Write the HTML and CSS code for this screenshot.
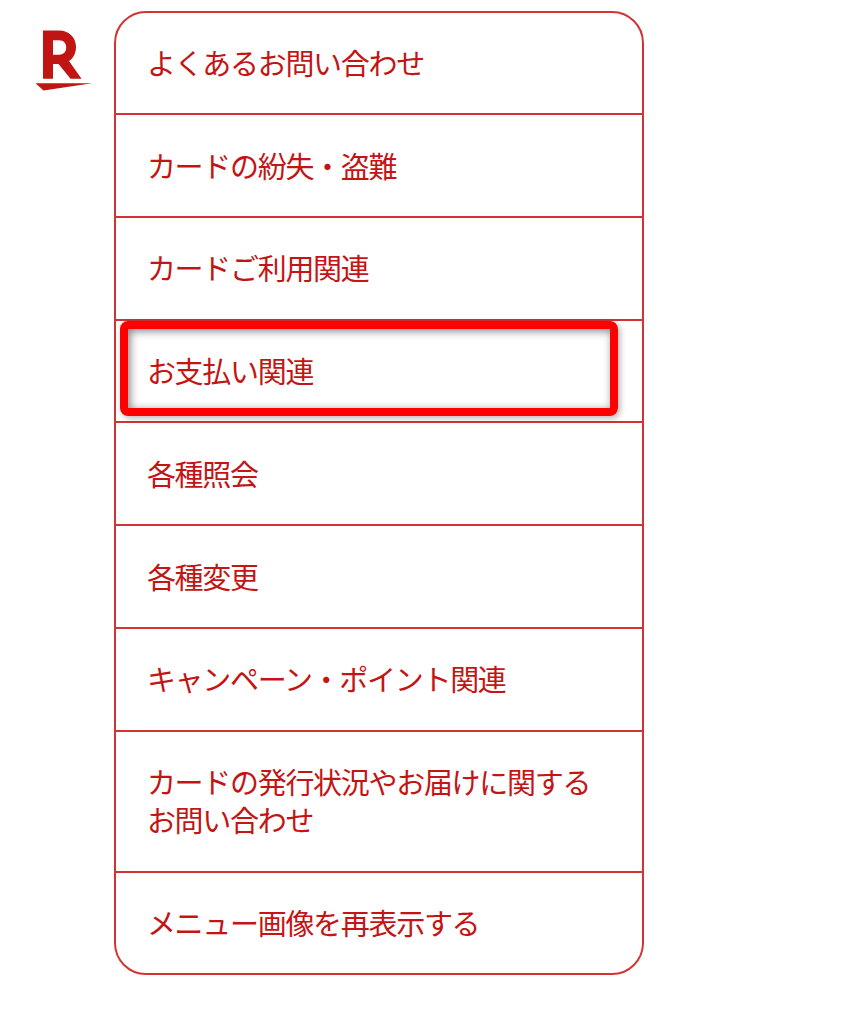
FILE: index.html
```
<!DOCTYPE html>
<html lang="ja">
<head>
    <meta charset="UTF-8">
    <meta name="viewport" content="width=device-width, initial-scale=1.0">
    <title>お問い合わせメニュー</title>
    <link rel="stylesheet" href="styles.css">
</head>
<body>
    <div class="chat">
        <svg class="logo" width="58" height="62" viewBox="0 0 58 62" role="img" aria-label="R">
            <path fill="#c01512" fill-rule="evenodd" d="M8 .500H24C34 .500 41 7.500 41 17C41 23.500 38 28.500 34 31L46.500 48.800H35.500L23.500 34H18V48.800H8ZM18 10.200V24.700H24C28.500 24.700 31.200 22 31.200 17.500C31.200 13 28.500 10.200 24 10.200Z"/>
            <path fill="#c01512" d="M.500 53.200H57L8.500 60.500Z"/>
        </svg>
        <ul class="menu">
            <li class="item">よくあるお問い合わせ</li>
            <li class="item">カードの紛失・盗難</li>
            <li class="item">カードご利用関連</li>
            <li class="item selected">お支払い関連</li>
            <li class="item">各種照会</li>
            <li class="item">各種変更</li>
            <li class="item">キャンペーン・ポイント関連</li>
            <li class="item">カードの発行状況やお届けに関する<br>お問い合わせ</li>
            <li class="item">メニュー画像を再表示する</li>
        </ul>
    </div>
</body>
</html>
```
FILE: styles.css
```
body {
    margin: 0;
    background: #fff;
    color: #c41414;
    font-family: "Noto Sans CJK JP", sans-serif;
}
.chat {
    display: flex;
    align-items: flex-start;
    padding: 10.5px 0 0 35px;
}
.logo {
    margin: 19.5px 20.5px 0 0;
}
.menu {
    box-sizing: border-box;
    width: 530px;
    margin: 0;
    padding: 0;
    list-style: none;
    border: 2px solid #d23434;
    border-radius: 32px;
}
.item {
    position: relative;
    padding: 30.4px 31px 32.05px 31.4px;
    font-size: 29px;
    line-height: 38.3px;
    letter-spacing: -1.3px;
    white-space: nowrap;
    border-bottom: 2px solid #d23434;
}
.item:last-child {
    border-bottom: none;
}
/* red frame around the chosen row */
.selected::after {
    content: "";
    position: absolute;
    top: 0;
    left: 4px;
    width: 482px;
    height: 79px;
    border: 8px solid #f00;
    border-radius: 8px;
    box-shadow: 2px 2px 6px rgba(0, 0, 0, 0.3), inset 2px 2px 8px rgba(0, 0, 0, 0.5);
}
```
